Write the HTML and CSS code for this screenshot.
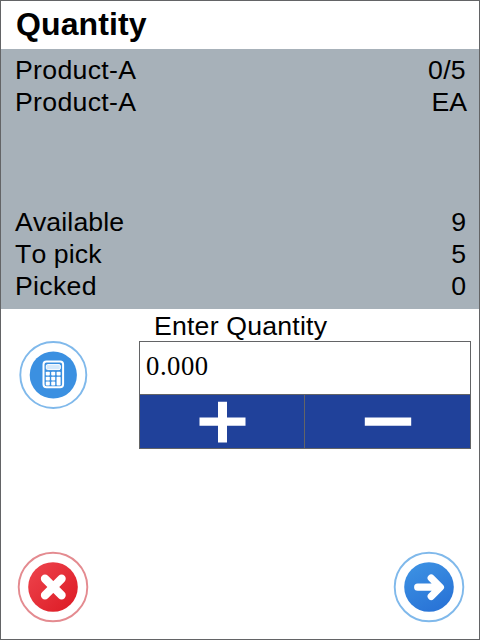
FILE: index.html
```html
<!DOCTYPE html>
<html lang="en">
<head>
<meta charset="utf-8">
<title>Quantity</title>
<link rel="stylesheet" href="styles.css">
</head>
<body>
<main class="screen">
  <h1 class="title">Quantity</h1>
  <section class="info">
    <div class="group">
      <div class="row"><span class="name">Product-A</span><span class="name">0/5</span></div>
      <div class="row"><span class="name">Product-A</span><span class="unit">EA</span></div>
    </div>
    <div class="group">
      <div class="row"><span class="tight">Available</span><span>9</span></div>
      <div class="row"><span class="tight">To pick</span><span>5</span></div>
      <div class="row"><span class="name">Picked</span><span>0</span></div>
    </div>
  </section>
  <section class="entry">
    <button class="round calc" aria-label="Calculator">
      <svg width="70" height="70" viewBox="0 0 70 70">
        <circle cx="35.3" cy="35" r="33" fill="#fff" stroke="#80b9eb" stroke-width="1.9"/>
        <circle cx="35.3" cy="35" r="23.6" fill="#3b90e1"/>
        <rect x="25.5" y="21.6" width="19.6" height="25.6" rx="3" fill="none" stroke="#fff" stroke-width="2"/>
        <rect x="28.3" y="24.6" width="14" height="5" rx="1.3" fill="#d5e9fb" stroke="#fff" stroke-width="1"/>
        <g fill="#fff">
          <rect x="27.8" y="31.7" width="4" height="3.9" rx=".8"/><rect x="33.2" y="31.7" width="4" height="3.900" rx=".8"/><rect x="38.600" y="31.7" width="4" height="3.900" rx=".8"/>
          <rect x="27.8" y="36.700" width="4" height="3.900" rx=".8"/><rect x="33.2" y="36.700" width="4" height="3.900" rx=".8"/><rect x="38.600" y="36.700" width="4" height="8.800" rx=".8"/>
          <rect x="27.8" y="41.600" width="4" height="3.900" rx=".8"/><rect x="33.2" y="41.600" width="4" height="3.900" rx=".8"/>
        </g>
      </svg>
    </button>
    <div class="field">
      <div class="label">Enter Quantity</div>
      <div class="value">0.000</div>
      <div class="steps">
        <button class="step" aria-label="Increase">
          <svg width="48" height="42" viewBox="0 0 48 42"><path d="M1.500 16.500H20V.8h9v15.700h18.500v8.300H29v16.800h-9V24.800H1.500z" fill="#fff"/></svg>
        </button>
        <button class="step" aria-label="Decrease">
          <svg width="48" height="42" viewBox="0 0 48 42"><path d="M.8 16.500h46.400v8.300H.8z" fill="#fff"/></svg>
        </button>
      </div>
    </div>
  </section>
  <footer class="actions">
    <button class="round" aria-label="Cancel">
      <svg width="72" height="72" viewBox="0 0 72 72">
        <defs><linearGradient id="red" x1="0" y1="0" x2="1" y2="1"><stop offset="0" stop-color="#ee454e"/><stop offset="1" stop-color="#dc1923"/></linearGradient></defs>
        <circle cx="36" cy="36" r="34.3" fill="#fff" stroke="#e48b90" stroke-width="1.9"/>
        <circle cx="36" cy="36" r="24.8" fill="url(#red)"/>
        <path d="M28 27.700l16.600 16.600M44.600 27.700L28 44.300" stroke="#fff" stroke-width="8.300" stroke-linecap="round"/>
      </svg>
    </button>
    <button class="round" aria-label="Next">
      <svg width="72" height="72" viewBox="0 0 72 72">
        <defs><linearGradient id="blue" x1="0" y1="0" x2=".5" y2="1"><stop offset="0" stop-color="#3e94e4"/><stop offset="1" stop-color="#2a75d7"/></linearGradient></defs>
        <circle cx="36" cy="36" r="34.3" fill="#fff" stroke="#80b9eb" stroke-width="1.9"/>
        <circle cx="36" cy="36" r="24.8" fill="url(#blue)"/>
        <path d="M24.700 36.200H47M38.200 27l9.200 9.200-9.200 9.200" fill="none" stroke="#fff" stroke-width="7.200" stroke-linecap="round" stroke-linejoin="round"/>
      </svg>
    </button>
  </footer>
</main>
</body>
</html>
```
FILE: styles.css
```css
* { box-sizing: border-box; }
body { margin: 0; }
button { margin: 0; padding: 0; border: 0; background: none; }
svg { display: block; }
.screen {
  width: 480px;
  height: 640px;
  border: 1px solid #636466;
  background: #fff;
  color: #000;
  font: 26.67px/32px "Liberation Sans", Arial, sans-serif;
  font-kerning: none;
  display: flex;
  flex-direction: column;
}
.title {
  height: 48px;
  margin: 0;
  padding-left: 15px;
  font-size: 32px;
  line-height: 46px;
  letter-spacing: .12px;
}
.info {
  height: 260px;
  padding: 5px 13px 7px 14px;
  background: #a7b1b9;
  display: flex;
  flex-direction: column;
  justify-content: space-between;
}
.row { display: flex; justify-content: space-between; }
.name { letter-spacing: .3px; }
.tight { letter-spacing: .12px; }
.unit { margin-right: -1px; }
.entry {
  display: flex;
  justify-content: space-between;
  padding: 0 8px 0 17px;
}
.calc { margin-top: 31px; height: 70px; }
.field { width: 332px; }
.label { height: 32px; padding-left: 15px; line-height: 34px; letter-spacing: .2px; }
.value {
  height: 54px;
  border: 1px solid #636466;
  padding-left: 6px;
  font-family: "Liberation Serif", "Times New Roman", serif;
  line-height: 49px;
  letter-spacing: .55px;
}
.steps {
  display: grid;
  grid-template-columns: 165px 1fr;
  height: 54px;
  border: 1px solid #636466;
  border-top: 0;
}
.step {
  display: flex;
  align-items: center;
  justify-content: center;
  background: #20419a;
}
.step:first-child { border-right: 1px solid #636466; }
.actions {
  display: flex;
  justify-content: space-between;
  margin-top: auto;
  padding: 0 14px 16px 16px;
}
```
